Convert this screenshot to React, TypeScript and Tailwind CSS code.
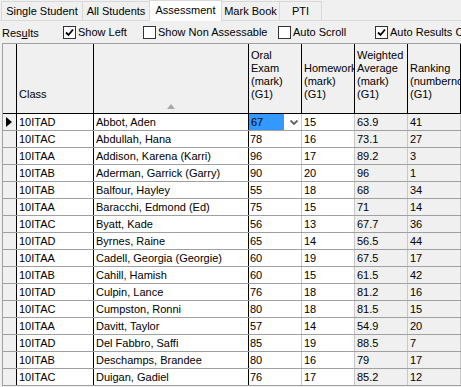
import React from "react"

type Row = {
  cls: string
  name: string
  oral: string
  hw: string
  avg: string
  rank: string
}

const rows: Row[] = [
  { cls: "10ITAD", name: "Abbot, Aden", oral: "67", hw: "15", avg: "63.9", rank: "41" },
  { cls: "10ITAC", name: "Abdullah, Hana", oral: "78", hw: "16", avg: "73.1", rank: "27" },
  { cls: "10ITAA", name: "Addison, Karena (Karri)", oral: "96", hw: "17", avg: "89.2", rank: "3" },
  { cls: "10ITAB", name: "Aderman, Garrick (Garry)", oral: "90", hw: "20", avg: "96", rank: "1" },
  { cls: "10ITAB", name: "Balfour, Hayley", oral: "55", hw: "18", avg: "68", rank: "34" },
  { cls: "10ITAA", name: "Baracchi, Edmond (Ed)", oral: "75", hw: "15", avg: "71", rank: "14" },
  { cls: "10ITAC", name: "Byatt, Kade", oral: "56", hw: "13", avg: "67.7", rank: "36" },
  { cls: "10ITAD", name: "Byrnes, Raine", oral: "65", hw: "14", avg: "56.5", rank: "44" },
  { cls: "10ITAA", name: "Cadell, Georgia (Georgie)", oral: "60", hw: "19", avg: "67.5", rank: "17" },
  { cls: "10ITAB", name: "Cahill, Hamish", oral: "60", hw: "15", avg: "61.5", rank: "42" },
  { cls: "10ITAD", name: "Culpin, Lance", oral: "76", hw: "18", avg: "81.2", rank: "16" },
  { cls: "10ITAC", name: "Cumpston, Ronni", oral: "80", hw: "18", avg: "81.5", rank: "15" },
  { cls: "10ITAA", name: "Davitt, Taylor", oral: "57", hw: "14", avg: "54.9", rank: "20" },
  { cls: "10ITAD", name: "Del Fabbro, Saffi", oral: "85", hw: "19", avg: "88.5", rank: "7" },
  { cls: "10ITAB", name: "Deschamps, Brandee", oral: "80", hw: "16", avg: "79", rank: "17" },
  { cls: "10ITAC", name: "Duigan, Gadiel", oral: "76", hw: "17", avg: "85.2", rank: "12" },
]

const tabs = [
  { label: "Single Student", w: "w-[82px]" },
  { label: "All Students", w: "w-[68px]" },
  { label: "Assessment", w: "w-[73px]" },
  { label: "Mark Book", w: "w-[59px]" },
  { label: "PTI", w: "w-[43px]" },
]

const Check = ({ checked, label }: { checked: boolean; label: string }) => (
  <div className="flex items-center gap-[2px] whitespace-nowrap">
    <div className="w-[13px] h-[13px] shrink-0 border border-[#333333] bg-white flex items-center justify-center">
      {checked && (
        <svg width="9" height="9" viewBox="0 0 9 9">
          <path d="M1 4.5 L3.5 7 L8 1.5" fill="none" stroke="#000" strokeWidth="1.8" />
        </svg>
      )}
    </div>
    <span>{label}</span>
  </div>
)

const HeaderCell = ({ w, lines, arrow }: { w: string; lines: string[]; arrow?: boolean }) => (
  <div className={`${w} relative h-full shrink-0 border-r border-black flex flex-col justify-end px-[2px] pb-[12px] leading-[13px] overflow-hidden`}>
    {lines.map((l) => (
      <div key={l} className="whitespace-nowrap">
        {l}
      </div>
    ))}
    {arrow && (
      <svg className="absolute left-[73px] top-[60px]" width="8" height="5" viewBox="0 0 8 5">
        <path d="M0 5 L4 0 L8 5 Z" fill="#a8a8a8" />
      </svg>
    )}
  </div>
)

export default function App() {
  return (
    <div className="w-[461px] h-[387px] overflow-hidden bg-[#f0f0f0] text-[11px] text-black font-['Liberation_Sans',Arial,sans-serif]">
      {/* tabs */}
      <div className="h-[21px] flex items-end pl-[1px] border-b border-[#d9d9d9]">
        {tabs.map((t, i) =>
          t.label === "Assessment" ? (
            <div key={t.label} className={`${t.w} shrink-0 relative z-10 h-[21px] -mb-px -ml-px bg-white border border-b-0 border-[#d9d9d9] text-center leading-[18px]`}>
              {t.label}
            </div>
          ) : (
            <div key={t.label} className={`${t.w} shrink-0 h-[19px] ${i === 0 ? "" : "-ml-px"} bg-[#f0f0f0] border border-b-0 border-[#d9d9d9] text-center leading-[19px]`}>
              {t.label}
            </div>
          )
        )}
      </div>

      {/* toolbar */}
      <div className="h-[22px] flex items-center whitespace-nowrap pt-[1px]">
        <div className="w-[63px] shrink-0 pl-[2px] pt-[2px]">
          Res<span className="underline">u</span>lts
        </div>
        <div className="w-[80px] shrink-0">
          <Check checked label="Show Left" />
        </div>
        <div className="w-[135px] shrink-0">
          <Check checked={false} label="Show Non Assessable" />
        </div>
        <div className="w-[97px] shrink-0">
          <Check checked={false} label="Auto Scroll" />
        </div>
        <div className="shrink-0">
          <Check checked label="Auto Results Calculation" />
        </div>
      </div>

      {/* grid */}
      <div className="ml-[2px] border-l border-t border-[#a0a0a0]">
        <div className="h-[70px] flex border-b border-black">
          <HeaderCell w="w-[14px]" lines={[]} />
          <HeaderCell w="w-[77px]" lines={["Class"]} />
          <HeaderCell w="w-[155px]" lines={[]} arrow />
          <HeaderCell w="w-[53px]" lines={["Oral", "Exam", "(mark)", "(G1)"]} />
          <HeaderCell w="w-[53px]" lines={["Homework", "(mark)", "(G1)"]} />
          <HeaderCell w="w-[53px]" lines={["Weighted", "Average", "(mark)", "(G1)"]} />
          <HeaderCell w="w-[53px]" lines={["Ranking", "(numbernot", "(G1)"]} />
        </div>

        {rows.map((r, i) => (
          <div key={i} className="h-[17px] flex border-b border-[#a0a0a0] leading-[16px]">
            <div className="w-[14px] shrink-0 border-r border-black bg-[#f0f0f0] flex items-center pl-[3px]">
              {i === 0 && (
                <svg width="6" height="10" viewBox="0 0 6 10">
                  <path d="M0 0 L6 5 L0 10 Z" fill="#000" />
                </svg>
              )}
            </div>
            <div className="w-[77px] shrink-0 border-r border-black bg-white pl-[2px]">{r.cls}</div>
            <div className="w-[155px] shrink-0 border-r border-black bg-white pl-[2px] whitespace-nowrap overflow-hidden">
              {r.name}
            </div>
            <div className="w-[53px] shrink-0 border-r border-[#c8c8c8] bg-white flex">
              {i === 0 ? (
                <>
                  <div className="w-[35px] h-[16px] bg-[#3399ff] border border-dotted border-[#c47a3a] leading-[14px] pl-[1px]">
                    {r.oral}
                  </div>
                  <div className="flex-1 flex items-center justify-end pr-[3px]">
                    <svg width="8" height="5" viewBox="0 0 8 5">
                      <path d="M0.5 0.5 L4 4 L7.5 0.5" fill="none" stroke="#606060" strokeWidth="1.8" />
                    </svg>
                  </div>
                </>
              ) : (
                <span className="pl-[1px]">{r.oral}</span>
              )}
            </div>
            <div className="w-[53px] shrink-0 border-r border-[#c8c8c8] bg-white pl-[2px]">{r.hw}</div>
            <div className="w-[53px] shrink-0 border-r border-[#c8c8c8] bg-[#f0f0f0] pl-[2px]">{r.avg}</div>
            <div className="w-[53px] shrink-0 border-r border-[#c8c8c8] bg-[#f0f0f0] pl-[2px]">{r.rank}</div>
          </div>
        ))}
      </div>
    </div>
  )
}
